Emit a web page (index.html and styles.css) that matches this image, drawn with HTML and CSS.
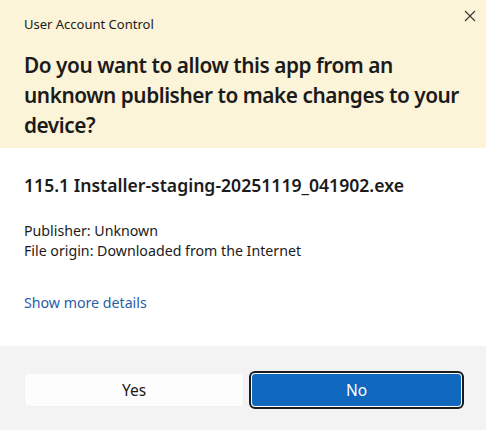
FILE: index.html
```html
<!DOCTYPE html>
<html lang="en">
<head>
  <meta charset="UTF-8" />
  <meta name="viewport" content="width=device-width, initial-scale=1.0" />
  <title>User Account Control</title>
  <link rel="stylesheet" href="styles.css">
</head>
<body>
  <div class="dialog">
    <header class="banner">
      <div class="titlebar">
        <span class="caption">User Account Control</span>
        <button class="close" aria-label="Close">
          <svg width="12" height="12" viewBox="0 0 12 12">
            <path d="M1 1L11 11M11 1L1 11" stroke="#333" stroke-width="1.1" fill="none"/>
          </svg>
        </button>
      </div>
      <h1>Do you want to allow this app from an unknown publisher to make changes to your device?</h1>
    </header>

    <section class="content">
      <div class="app-name">115.1 Installer-staging-20251119_041902.exe</div>
      <div class="meta">
        <p>Publisher: Unknown</p>
        <p>File origin: Downloaded from the Internet</p>
      </div>
      <a class="details" href="#">Show more details</a>
    </section>

    <footer class="actions">
      <button class="btn">Yes</button>
      <button class="btn primary">No</button>
    </footer>
  </div>
</body>
</html>
```

FILE: styles.css
```css
body {
  margin: 0;
  font-family: 'Noto Sans', 'Open Sans', sans-serif;
  color: #1b1b1b;
  background: #fff;
}
.dialog {
  width: 486px;
  height: 430px;
  display: flex;
  flex-direction: column;
}
.banner {
  background: #fcf4d8;
  height: 148px;
  padding: 0 0 0 24px;
  box-sizing: border-box;
}
.titlebar {
  display: flex;
  justify-content: space-between;
  align-items: flex-start;
  height: 50px;
}
.caption {
  font-size: 13px;
  margin-top: 15px;
}
.close {
  border: 0;
  background: none;
  width: 32px;
  height: 32px;
  padding: 0;
  display: flex;
  align-items: center;
  justify-content: center;
}
.banner h1 {
  margin: 0;
  font-size: 20.8px;
  font-weight: 600;
  line-height: 30px;
  letter-spacing: -0.45px;
  padding-right: 8px;
}
.content {
  flex: 1;
  padding: 25px 24px 0;
}
.app-name {
  font-size: 17.6px;
  font-weight: 600;
  line-height: 24px;
}
.meta {
  margin-top: 24px;
  font-size: 14.2px;
  line-height: 20px;
}
.meta p {
  margin: 0;
}
.details {
  display: inline-block;
  margin-top: 32px;
  font-size: 14.2px;
  color: #2a5ea6;
  text-decoration: none;
}
.actions {
  height: 84px;
  background: #f3f3f3;
  display: grid;
  grid-template-columns: 220px 1fr;
  grid-template-rows: 34px;
  gap: 7px;
  padding: 27px 24px 0;
  box-sizing: border-box;
}
.btn {
  height: 34px;
  border: 1px solid #f0f0f0;
  border-radius: 4px;
  background: #fdfdfd;
  font-family: inherit;
  font-size: 15.5px;
  color: #1b1b1b;
}
.primary {
  background: #0f67be;
  color: #fff;
  border: 1px solid #fff;
  outline: 2px solid #1b1b1b;
  outline-offset: 0;
}
```
